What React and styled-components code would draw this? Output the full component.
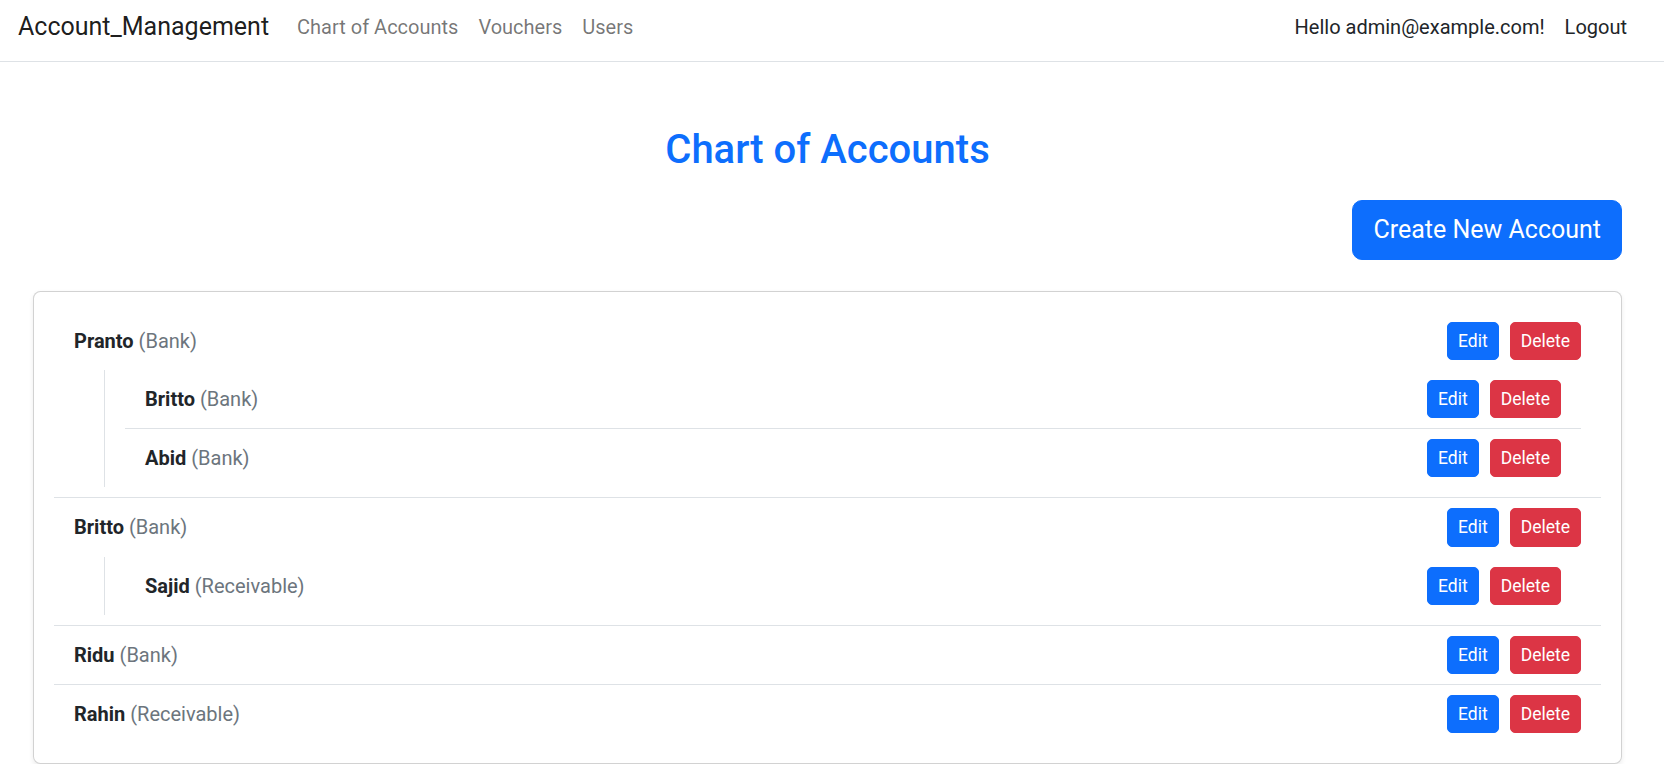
import React from 'react';
import styled, { createGlobalStyle } from 'styled-components';

const accounts = [
  {
    id: 1,
    name: 'Pranto',
    type: 'Bank',
    children: [
      { id: 2, name: 'Britto', type: 'Bank' },
      { id: 3, name: 'Abid', type: 'Bank' }
    ]
  },
  {
    id: 4,
    name: 'Britto',
    type: 'Bank',
    children: [{ id: 5, name: 'Sajid', type: 'Receivable' }]
  },
  { id: 6, name: 'Ridu', type: 'Bank' },
  { id: 7, name: 'Rahin', type: 'Receivable' }
];

function AccountNode({ account }) {
  return (
    <Item>
      <Row>
        <span>
          <Name>{account.name}</Name> <Type>({account.type})</Type>
        </span>
        <Actions>
          <Button $variant="primary">Edit</Button>
          <Button $variant="danger">Delete</Button>
        </Actions>
      </Row>
      {account.children && account.children.length > 0 && (
        <Children>
          <List>
            {account.children.map(child => (
              <AccountNode key={child.id} account={child} />
            ))}
          </List>
        </Children>
      )}
    </Item>
  );
}

export default function App() {
  return (
    <>
      <GlobalStyle />
      <Navbar>
        <Brand href="#">Account_Management</Brand>
        <NavLinks>
          <NavLink href="#">Chart of Accounts</NavLink>
          <NavLink href="#">Vouchers</NavLink>
          <NavLink href="#">Users</NavLink>
        </NavLinks>
        <NavRight>
          <NavLink as="span" $dark>Hello admin@example.com!</NavLink>
          <NavLink href="#" $dark>Logout</NavLink>
        </NavRight>
      </Navbar>

      <Main>
        <Title>Chart of Accounts</Title>
        <Toolbar>
          <CreateButton>Create New Account</CreateButton>
        </Toolbar>
        <Card>
          <List>
            {accounts.map(acc => (
              <AccountNode key={acc.id} account={acc} />
            ))}
          </List>
        </Card>
      </Main>
    </>
  );
}

// Estilos
const GlobalStyle = createGlobalStyle`
  * { box-sizing: border-box; }
  body {
    margin: 0;
    background: #fff;
    color: #212529;
    font-family: Roboto, "Noto Sans", "Liberation Sans", sans-serif;
    font-size: 20px;
    line-height: 1.5;
  }
`;

const Navbar = styled.nav`
  display: flex;
  align-items: center;
  height: 62px;
  padding: 0 27px 8px 18px;
  border-bottom: 1px solid #dee2e6;
  background: #fff;
`;

const Brand = styled.a`
  font-size: 25px;
  color: rgba(0, 0, 0, 0.9);
  text-decoration: none;
  margin-right: 18px;
`;

const NavLinks = styled.div`
  display: flex;
  align-items: center;
`;

const NavRight = styled.div`
  display: flex;
  align-items: center;
  margin-left: auto;
`;

const NavLink = styled.a`
  font-size: 20px;
  padding: 0 10px;
  text-decoration: none;
  color: ${({ $dark }) => ($dark ? '#212529' : 'rgba(0, 0, 0, 0.55)')};
`;

const Main = styled.main`
  padding: 64px 42px 0 33px;
`;

const Title = styled.h2`
  margin: 0 0 26px;
  text-align: center;
  font-size: 40px;
  font-weight: 500;
  line-height: 1.2;
  color: #0d6efd;
`;

const Toolbar = styled.div`
  display: flex;
  justify-content: flex-end;
  margin-bottom: 31px;
`;

const CreateButton = styled.button`
  font-family: inherit;
  font-size: 25px;
  line-height: 1.5;
  padding: 10px 20px;
  color: #fff;
  background: #0d6efd;
  border: 1px solid #0d6efd;
  border-radius: 10px;
  cursor: pointer;
`;

const Card = styled.div`
  background: #fff;
  border: 1px solid rgba(0, 0, 0, 0.175);
  border-radius: 7.5px;
  box-shadow: 0 2.5px 5px rgba(0, 0, 0, 0.075);
  padding: 20px;
`;

const List = styled.ul`
  list-style: none;
  margin: 0;
  padding: 0;
`;

const Item = styled.li`
  padding: 10px 20px;
  border-bottom: 1px solid #dee2e6;

  &:last-child {
    border-bottom: none;
  }
`;

const Row = styled.div`
  display: flex;
  justify-content: space-between;
  align-items: center;
`;

const Name = styled.strong`
  font-weight: 700;
`;

const Type = styled.span`
  color: #6c757d;
`;

const Actions = styled.div`
  display: flex;
  gap: 11px;
`;

const Button = styled.button`
  font-family: inherit;
  font-size: 17.5px;
  line-height: 1.5;
  padding: 5px 10px;
  color: #fff;
  background: ${({ $variant }) => ($variant === 'danger' ? '#dc3545' : '#0d6efd')};
  border: 1px solid ${({ $variant }) => ($variant === 'danger' ? '#dc3545' : '#0d6efd')};
  border-radius: 5px;
  cursor: pointer;
`;

const Children = styled.div`
  margin: 10px 0 0 30px;
  padding-left: 20px;
  border-left: 1px solid #dee2e6;
`;
